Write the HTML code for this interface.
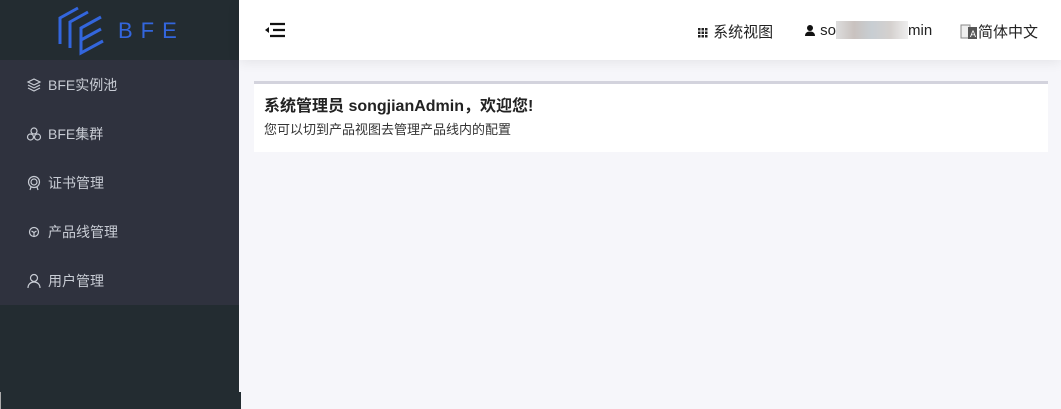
<!DOCTYPE html>
<html><head><meta charset="utf-8"><style>
*{margin:0;padding:0;box-sizing:border-box}
body{width:1061px;height:409px;overflow:hidden;background:#f6f6fa;font-family:"Liberation Sans","Noto Sans CJK SC",sans-serif;position:relative}
.side{position:absolute;left:0;top:0;width:239px;height:409px;background:#232c31}
.logo{height:60px;position:relative}
.menu{position:absolute;top:60px;left:0;width:239px;height:245px;background:#2f323e}
.item{height:49px;display:flex;align-items:center;padding-left:26px;color:#c8ccd4;font-size:14px}
.item svg{width:16px;height:16px;margin-right:6px}
.bottom{position:absolute;left:0;top:392px;width:241px;height:17px;background:#232c31;border-left:1px solid #aaa}
.head{position:absolute;left:239px;top:0;right:0;height:60px;background:#fff;box-shadow:0 2px 12px rgba(0,0,0,.08)}
.card{position:absolute;left:254px;top:81px;width:794px;height:71px;background:#fff;border-top:3px solid #d3d3dd;padding:13px 10px}
.card h1{font-size:16px;font-weight:bold;color:#222;line-height:20px}
.card p{font-size:13px;color:#333;margin-top:2px}
.hd{position:absolute;top:21px;font-size:15px;color:#222;display:flex;align-items:center}
</style></head><body>
<div class="side">
<div class="logo">
<svg width="239" height="60" style="position:absolute;left:0;top:0">
<g stroke="#3366dd" stroke-width="3" fill="none">
<path d="M78 8 L60 18 L60 44"/>
<path d="M88 12 L70 22 L70 48"/>
<path d="M101 17 L81 28 L81 53 L103 41"/>
<path d="M81 40 L101 29"/>
</g>
<text x="118" y="38" fill="#3366dd" font-size="22" letter-spacing="8" font-family="Liberation Sans">BFE</text>
</svg>
</div>
<div class="menu">
<div class="item"><svg viewBox="0 0 16 16" fill="none" stroke="#c8ccd4" stroke-width="1.2"><path d="M8 2L14 5 8 8 2 5z"/><path d="M2 8l6 3 6-3"/><path d="M2 11l6 3 6-3"/></svg>BFE实例池</div>
<div class="item"><svg viewBox="0 0 16 16" fill="none" stroke="#c8ccd4" stroke-width="1.2"><circle cx="8" cy="5" r="3"/><circle cx="4.5" cy="11" r="3"/><circle cx="11.5" cy="11" r="3"/></svg>BFE集群</div>
<div class="item"><svg viewBox="0 0 16 16" fill="none" stroke="#c8ccd4" stroke-width="1.2"><circle cx="8" cy="7" r="5.5"/><circle cx="8" cy="7" r="3"/><path d="M5 12l-1 3M11 12l1 3"/></svg>证书管理</div>
<div class="item"><svg viewBox="0 0 16 16" fill="none" stroke="#c8ccd4" stroke-width="1.2"><circle cx="8" cy="8" r="4.5"/><path d="M5.5 7L8 8.5 10.5 7M8 8.5V12"/></svg>产品线管理</div>
<div class="item"><svg viewBox="0 0 16 16" fill="none" stroke="#c8ccd4" stroke-width="1.2"><circle cx="8" cy="5" r="3.5"/><path d="M2 15c0-4 3-6 6-6s6 2 6 6"/></svg>用户管理</div>
</div>
<div class="bottom"></div>
</div>
<div class="head">
<svg style="position:absolute;left:25px;top:21px" width="22" height="18" viewBox="0 0 22 18"><g stroke="#111" stroke-width="2.2"><path d="M6 3h15M9 9h12M6 15h15"/></g><path d="M1 9l4-3v6z" fill="#111"/></svg>
</div>
<div class="hd" style="left:697px"><svg width="12" height="12" viewBox="0 0 12 12" fill="#222"><rect x="1" y="2" width="2.5" height="2.5"/><rect x="4.5" y="2" width="2.5" height="2.5"/><rect x="8" y="2" width="2.5" height="2.5"/><rect x="1" y="5.5" width="2.5" height="2.5"/><rect x="4.5" y="5.5" width="2.5" height="2.5"/><rect x="8" y="5.5" width="2.5" height="2.5"/><rect x="1" y="9" width="2.5" height="2.5"/><rect x="4.5" y="9" width="2.5" height="2.5"/><rect x="8" y="9" width="2.5" height="2.5"/></svg>&nbsp;系统视图</div>
<div class="hd" style="left:804px"><svg width="12" height="12" viewBox="0 0 12 12" fill="#111"><circle cx="6" cy="4" r="3"/><path d="M1 12c0-3 2-4.5 5-4.5s5 1.5 5 4.5z"/></svg>&nbsp;so<span style="display:inline-block;width:72px;height:18px;background:linear-gradient(90deg,#ddd,#c9c2bf 25%,#c8ced3 50%,#d4d0ce 75%,#eee)"></span>min</div>
<div class="hd" style="left:960px"><svg width="18" height="18" viewBox="0 0 18 18"><rect x="1" y="2" width="9" height="13" fill="#eee" stroke="#888"/><rect x="8" y="4" width="9" height="12" fill="#555"/><text x="10" y="14" font-size="9" fill="#fff" font-family="Liberation Sans">A</text></svg>简体中文</div>
<div class="card"><h1>系统管理员 songjianAdmin，欢迎您!</h1><p>您可以切到产品视图去管理产品线内的配置</p></div>
</body></html>
